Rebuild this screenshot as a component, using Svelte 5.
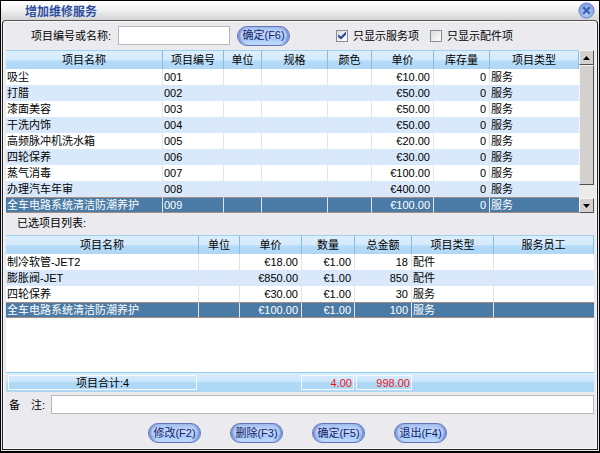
<script>
  let keyword = $state('')
  let remark = $state('')
  let onlyServices = $state(true)
  let onlyParts = $state(false)
  let selectedItem = $state(8)
  let selectedPick = $state(3)

  const items = [
    { name: '吸尘', code: '001', price: '€10.00' },
    { name: '打腊', code: '002', price: '€50.00' },
    { name: '漆面美容', code: '003', price: '€50.00' },
    { name: '干洗内饰', code: '004', price: '€50.00' },
    { name: '高频脉冲机洗水箱', code: '005', price: '€20.00' },
    { name: '四轮保养', code: '006', price: '€30.00' },
    { name: '蒸气消毒', code: '007', price: '€100.00' },
    { name: '办理汽车年审', code: '008', price: '€400.00' },
    { name: '全车电路系统清洁防潮养护', code: '009', price: '€100.00' },
  ]

  const picks = [
    { name: '制冷软管-JET2', price: '€18.00', total: 18, type: '配件' },
    { name: '膨胀阀-JET', price: '€850.00', total: 850, type: '配件' },
    { name: '四轮保养', price: '€30.00', total: 30, type: '服务' },
    { name: '全车电路系统清洁防潮养护', price: '€100.00', total: 100, type: '服务' },
  ]

  const sum = picks.reduce((acc, pick) => acc + pick.total, 0)

  const actions = ['修改(F2)', '删除(F3)', '确定(F5)', '退出(F4)']
</script>

<div class="window">
  <header>
    <h1>增加维修服务</h1>
    <button class="close" aria-label="关闭">
      <svg viewBox="0 0 17 17" width="17" height="17">
        <defs>
          <radialGradient id="ball" cx="50%" cy="65%" r="60%">
            <stop offset="0" stop-color="#b9d4fa" />
            <stop offset="1" stop-color="#7c9ce0" />
          </radialGradient>
        </defs>
        <circle cx="8.5" cy="8.5" r="7.6" fill="url(#ball)" stroke="#6f86c4" />
        <path d="M5.2 5.2l6.6 6.6M11.8 5.2l-6.6 6.6" stroke="#3a5fae" stroke-width="2.2" />
      </svg>
    </button>
  </header>

  <main>
    <form class="search" onsubmit={(e) => e.preventDefault()}>
      <label for="keyword">项目编号或名称:</label>
      <input id="keyword" class="keyword" type="text" bind:value={keyword} />
      <button class="pill">确定(F6)</button>
      <label class="check first">
        <input type="checkbox" bind:checked={onlyServices} />
        只显示服务项
      </label>
      <label class="check">
        <input type="checkbox" bind:checked={onlyParts} />
        只显示配件项
      </label>
    </form>

    <section class="items">
      <table>
        <colgroup>
          <col />
          <col class="w61" />
          <col class="w38" />
          <col class="w66" />
          <col class="w44" />
          <col class="w62" />
          <col class="w56" />
          <col class="w89" />
        </colgroup>
        <thead>
          <tr>
            <th>项目名称</th>
            <th>项目编号</th>
            <th>单位</th>
            <th>规格</th>
            <th>颜色</th>
            <th>单价</th>
            <th>库存量</th>
            <th>项目类型</th>
          </tr>
        </thead>
        <tbody>
          {#each items as item, i}
            <tr class:selected={selectedItem === i} onclick={() => (selectedItem = i)}>
              <td>{item.name}</td>
              <td>{item.code}</td>
              <td></td>
              <td></td>
              <td></td>
              <td class="num">{item.price}</td>
              <td class="num">0</td>
              <td>服务</td>
            </tr>
          {/each}
        </tbody>
      </table>
      <div class="scrollbar">
        <button aria-label="向上">
          <svg viewBox="0 0 7 4" width="7" height="4"><path d="M0 4L3.5 0L7 4z" /></svg>
        </button>
        <div class="thumb"></div>
        <div class="track"></div>
        <button aria-label="向下">
          <svg viewBox="0 0 7 4" width="7" height="4"><path d="M0 0L3.5 4L7 0z" /></svg>
        </button>
      </div>
    </section>

    <h2>已选项目列表:</h2>

    <section class="picks">
      <table>
        <colgroup>
          <col />
          <col class="w41" />
          <col class="w62" />
          <col class="w53" />
          <col class="w57" />
          <col class="w82" />
          <col class="w100" />
        </colgroup>
        <thead>
          <tr>
            <th>项目名称</th>
            <th>单位</th>
            <th>单价</th>
            <th>数量</th>
            <th>总金额</th>
            <th>项目类型</th>
            <th>服务员工</th>
          </tr>
        </thead>
        <tbody>
          {#each picks as pick, i}
            <tr class:selected={selectedPick === i} onclick={() => (selectedPick = i)}>
              <td>{pick.name}</td>
              <td></td>
              <td class="num">{pick.price}</td>
              <td class="num">€1.00</td>
              <td class="num">{pick.total}</td>
              <td>{pick.type}</td>
              <td></td>
            </tr>
          {/each}
        </tbody>
      </table>
      <div class="totals">
        <span class="count">项目合计:{picks.length}</span>
        <span class="sum w53">{picks.length}.00</span>
        <span class="sum w56">{sum}.00</span>
      </div>
    </section>

    <div class="remark">
      <label for="remark"><span>备</span><span>注:</span></label>
      <input id="remark" type="text" bind:value={remark} />
    </div>

    <footer>
      {#each actions as action}
        <button class="pill">{action}</button>
      {/each}
    </footer>
  </main>
</div>

<style>
  :global(body) {
    margin: 0;
    background: #000;
  }
  * {
    box-sizing: border-box;
  }
  .window {
    display: flex;
    flex-direction: column;
    min-height: 100vh;
    padding: 0 1px 1px;
    border: 1px solid #000;
    border-bottom-width: 2px;
    background: #e8e8ec;
    color: #000;
    font: 11px/16px 'Liberation Sans', 'Noto Sans CJK SC', sans-serif;
  }
  button,
  input {
    margin: 0;
    font: inherit;
  }
  header {
    display: flex;
    align-items: center;
    justify-content: space-between;
    height: 19px;
    margin: 0 -1px;
    padding: 0 4px 0 24px;
    background: linear-gradient(#fff, #f4f4f4 40%, #d4d4d6);
  }
  h1 {
    margin: 0;
    padding-top: 3px;
    color: #2c4fa0;
    font-size: 12px;
    line-height: 16px;
  }
  .close {
    width: 17px;
    height: 17px;
    padding: 0;
    border: 0;
    background: none;
  }
  .close svg {
    display: block;
  }
  main {
    display: flex;
    flex: 1;
    flex-direction: column;
    padding: 0 3px;
    border: 1px solid #222;
    border-top-color: #555;
    border-radius: 4px 4px 0 0;
    background: #ebeaee;
    box-shadow: inset 0 0 0 1px #f8f8fa;
  }
  .search {
    display: flex;
    align-items: center;
    height: 29px;
    padding-left: 25px;
  }
  input[type='text'] {
    height: 19px;
    padding: 0 3px;
    border: 1px solid #b4b8b8;
    border-radius: 0;
    background: #fff;
  }
  .keyword {
    width: 112px;
    margin: 0 7px;
  }
  .pill {
    width: 53px;
    height: 20px;
    padding: 0 0 1px;
    border: 1px solid #6476b8;
    border-radius: 10px;
    background: linear-gradient(#a3bef0, #c4d8fa 40%, #a9c8f6 70%, #c3e0ff);
    box-shadow:
      inset 3px 0 2px -1px #7590d4,
      inset -3px 0 2px -1px #7590d4;
    color: #10246c;
    line-height: 16px;
    white-space: nowrap;
  }
  .check {
    display: flex;
    align-items: center;
    gap: 5px;
    margin-left: 11px;
  }
  .check.first {
    margin-left: 46px;
  }
  .check input {
    display: grid;
    place-items: center;
    width: 12px;
    height: 12px;
    border: 1px solid #8a8d92;
    background: linear-gradient(135deg, #dcdcdc, #fff);
    appearance: none;
  }
  .check input:checked::before {
    content: '';
    width: 8px;
    height: 8px;
    background: #2a489c;
    clip-path: polygon(0 35%, 35% 62%, 100% 0, 100% 38%, 38% 100%, 0 70%);
  }
  table {
    width: 100%;
    border-collapse: separate;
    border-spacing: 0;
    table-layout: fixed;
  }
  th {
    height: 19px;
    padding: 0;
    border-top: 1px solid #9fd0f0;
    border-right: 1px solid #85bde6;
    background: linear-gradient(#dceefd, #d4eafc 50%, #b4dbf8 55%, #b0d8f6);
    font-weight: normal;
    line-height: 18px;
  }
  td {
    height: 16px;
    padding: 0 3px 0 1px;
    overflow: hidden;
    border-right: 1px solid #e2e4ea;
    background: #fff;
    line-height: 16px;
    white-space: nowrap;
  }
  td:last-child {
    border-right: 0;
  }
  tr:nth-child(even) td {
    background: #d9e9fb;
  }
  tr.selected td {
    border-top: 1px solid #a58c80;
    border-bottom: 1px solid #a58c80;
    background: #4a7ba6;
    color: #fff;
    line-height: 14px;
  }
  .num {
    text-align: right;
  }
  .items {
    display: flex;
  }
  .items table {
    flex: 1;
    min-width: 0;
  }
  .scrollbar {
    display: flex;
    flex-direction: column;
    width: 15px;
  }
  .scrollbar button,
  .thumb {
    border: 1px solid #f4f4f4;
    border-right-color: #505050;
    border-bottom-color: #505050;
    background: #d4d0ce;
  }
  .scrollbar button {
    display: grid;
    place-items: center;
    height: 15px;
    padding: 0;
  }
  .thumb {
    flex: 9;
  }
  .track {
    flex: 1;
    background: #ecebea;
  }
  h2 {
    margin: 0;
    padding: 2px 0 4px 11px;
    font-size: 11px;
    font-weight: normal;
    line-height: 16px;
  }
  .picks {
    display: flex;
    flex: 1;
    flex-direction: column;
    background: #fff;
  }
  .totals {
    display: flex;
    gap: 2px;
    height: 20px;
    margin-top: auto;
    padding: 2px 182px 2px 2px;
    border-top: 1px solid #8fcdf5;
    background: linear-gradient(#dceefd, #c9e5fb 45%, #b0d9f7 50%, #aed7f6);
  }
  .totals span {
    border: 1px solid #f4faff;
    line-height: 14px;
  }
  .count {
    flex: 1;
    margin-right: 102px;
    text-align: center;
  }
  .sum {
    padding-right: 1px;
    color: #f01818;
    text-align: right;
  }
  .remark {
    display: flex;
    align-items: center;
    padding: 3px 0 9px 3px;
  }
  .remark label {
    display: flex;
    gap: 11px;
    width: 42px;
  }
  .remark input {
    flex: 1;
    min-width: 0;
  }
  footer {
    display: flex;
    justify-content: center;
    gap: 29px;
    padding: 0 5px 6px 0;
  }
  .w38 {
    width: 38px;
  }
  .w41 {
    width: 41px;
  }
  .w44 {
    width: 44px;
  }
  .w53 {
    width: 53px;
  }
  .w56 {
    width: 56px;
  }
  .w57 {
    width: 57px;
  }
  .w61 {
    width: 61px;
  }
  .w62 {
    width: 62px;
  }
  .w66 {
    width: 66px;
  }
  .w82 {
    width: 82px;
  }
  .w89 {
    width: 89px;
  }
  .w100 {
    width: 100px;
  }
</style>
